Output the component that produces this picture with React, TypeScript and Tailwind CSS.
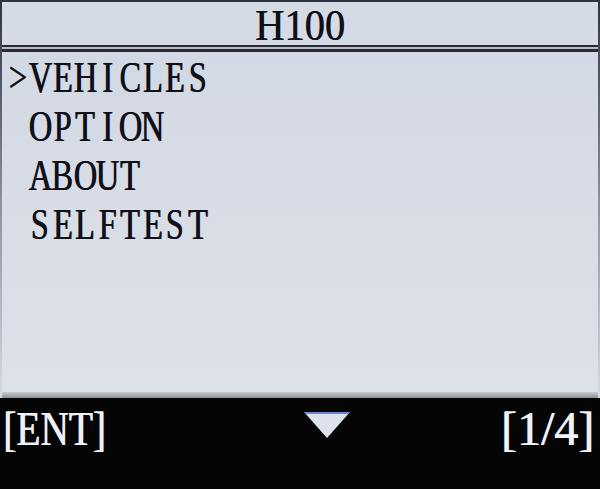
const items = ['VEHICLES', 'OPTION', 'ABOUT', 'SELFTEST'];

// Fixed-pitch serif cells, like the device's bitmap font
function MonoText({ text }: { text: string }) {
  return (
    <>
      {text.split('').map((c, i) => (
        <span key={i} className="inline-flex w-[22.5px] justify-center">
          <span className="inline-block shrink-0 scale-x-[0.72]">{c === ' ' ? '\u00a0' : c}</span>
        </span>
      ))}
    </>
  );
}

export default function App() {
  const selected = 0;

  return (
    <div className="w-[600px] h-[489px] flex flex-col overflow-hidden bg-black">
      {/* Screen frame: dark edges fading towards the bottom */}
      <div className="flex-1 flex flex-col pt-[2px] px-[2px] bg-gradient-to-b from-[#2e3444] via-[#8a909c] via-50% to-[#d5dbe5]">
        <div className="flex-1 flex flex-col bg-[#d5dbe5]">
          {/* Title */}
          <div className="h-[43px] flex justify-center pt-[1px]">
            <span className="font-['Liberation_Serif',serif] text-[45px] leading-none text-[#101018] scale-x-90 [text-shadow:0.6px_0_0_#101018]">
              H100
            </span>
          </div>

          {/* Double rule */}
          <div className="h-[2px] bg-[#2a2830]" />
          <div className="h-[2px] bg-[#b9bfca]" />
          <div className="h-[3px] bg-[#2a2830]" />

          {/* Menu */}
          <div className="flex-1 flex flex-col pt-[1px] pl-[4px] bg-gradient-to-b from-[#d3d9e4] to-[#dde1e8]">
            {items.map((label, i) => (
              <div
                key={label}
                className="h-[49px] leading-[49px] font-['Liberation_Serif',serif] text-[45px] text-[#101018] whitespace-nowrap [text-shadow:0.8px_0_0_#101018]"
              >
                <MonoText text={(i === selected ? '>' : ' ') + label} />
              </div>
            ))}
          </div>
          <div className="h-[6px] bg-gradient-to-b from-[#c8ccd3] to-[#8e9096]" />
        </div>
      </div>

      {/* Bottom soft-key bar */}
      <div className="h-[91px] flex items-start pt-[7px] pl-[3px] pr-[6px] bg-[#050505] text-[#eef1f7] font-['Liberation_Serif',serif] text-[48px] leading-none [text-shadow:0.8px_0_0_#eef1f7]">
        <span className="w-[104px] origin-left scale-x-[0.82] whitespace-nowrap">[ENT]</span>
        <div className="flex-1 flex justify-center pl-[47px] pt-[7px]">
          <svg width="46" height="26" viewBox="0 0 46 26">
            <polygon points="0,0 46,0 23,26" fill="#dde2ec" />
            <line x1="1" y1="1" x2="45" y2="1" stroke="#6a86d8" strokeWidth="2" />
          </svg>
        </div>
        <span className="whitespace-nowrap">[1/4]</span>
      </div>
    </div>
  );
}
